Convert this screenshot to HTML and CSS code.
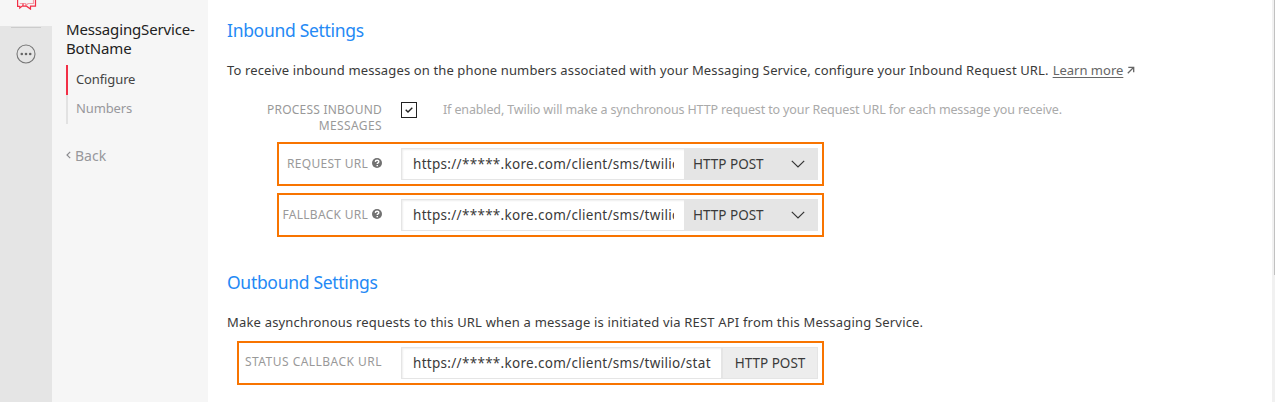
FILE: index.html
```html
<!DOCTYPE html>
<html lang="en">
<head>
<meta charset="utf-8">
<title>Messaging Service</title>
<link rel="stylesheet" href="styles.css">
</head>
<body>
<div class="app">
  <aside class="rail">
    <div class="rail-active">
      <svg class="chat-icon" width="20" height="10" viewBox="0 0 20 10" fill="none" stroke="#f22f46" stroke-width="1.2">
        <path d="M.6 0v6.300h2.200v1.700l3-2.400"/>
        <path d="M2.800 3.500h5.800v2l2.600-2h5.300V0" opacity=".45"/>
        <path d="M6 3.600v2.600h3.500l4 2.900V6.200h5V0"/>
      </svg>
    </div>
    <div class="rail-line"></div>
    <svg class="more-icon" width="20" height="20" viewBox="0 0 20 20">
      <circle cx="10" cy="10" r="9" fill="none" stroke="#777" stroke-width="1.1"/>
      <g fill="#666"><circle cx="5.800" cy="10" r="1.300"/><circle cx="10" cy="10" r="1.300"/><circle cx="14.200" cy="10" r="1.300"/></g>
    </svg>
  </aside>
  <nav class="side">
    <h1 class="side-title">MessagingService-<br>BotName</h1>
    <a class="side-item current">Configure</a>
    <a class="side-item">Numbers</a>
    <a class="back"><svg width="5" height="8" viewBox="0 0 5 8" fill="none" stroke="#8c8c90" stroke-width="1.200"><path d="M4.200.8 1 4l3.200 3.200"/></svg>Back</a>
  </nav>
  <main class="main">
    <h2 class="heading">Inbound Settings</h2>
    <p class="intro"><span class="intro-in">To receive inbound messages on the phone numbers associated with your Messaging Service, configure your Inbound Request URL.</span><a class="learn">Learn more</a><svg width="8" height="8" viewBox="0 0 8 8" fill="none" stroke="#666" stroke-width="1.300"><path d="M1.300 1.300h5.400v5M6.500 1.500 .8 7.200"/></svg></p>
    <div class="process">
      <div class="process-label">PROCESS INBOUND<br><span class="wide">MESSAGES</span></div>
      <span class="check"><svg width="8" height="6" viewBox="0 0 8 6" fill="none" stroke="#222" stroke-width="1.400"><path d="M.7 2.800 3 5 7.300.8"/></svg></span>
      <span class="hint">If enabled, Twilio will make a synchronous HTTP request to your Request URL for each message you receive.</span>
    </div>
    <div class="row">
      <div class="label">REQUEST URL<svg class="help" width="10" height="10" viewBox="0 0 10 10"><circle cx="5" cy="5" r="5" fill="#717171"/><path d="M3.300 3.900C3.400 1.600 6.900 1.800 6.800 3.700 6.800 4.900 5.200 4.700 5.200 6" fill="none" stroke="#fff" stroke-width="1.400"/><path d="M4.500 6.900H6v1.400H4.500z" fill="#fff"/></svg></div>
      <div class="input"><span class="url">https://*****.kore.com/client/sms/twilio</span></div>
      <div class="select">HTTP POST<svg width="14" height="8" viewBox="0 0 14 8" fill="none" stroke="#333" stroke-width="1.200"><path d="M.8.8 7 7 13.200.8"/></svg></div>
    </div>
    <div class="row second">
      <div class="label">FALLBACK URL<svg class="help" width="10" height="10" viewBox="0 0 10 10"><circle cx="5" cy="5" r="5" fill="#717171"/><path d="M3.300 3.900C3.400 1.600 6.900 1.800 6.800 3.700 6.800 4.900 5.200 4.700 5.200 6" fill="none" stroke="#fff" stroke-width="1.400"/><path d="M4.500 6.900H6v1.400H4.500z" fill="#fff"/></svg></div>
      <div class="input"><span class="url">https://*****.kore.com/client/sms/twilio</span></div>
      <div class="select">HTTP POST<svg width="14" height="8" viewBox="0 0 14 8" fill="none" stroke="#333" stroke-width="1.200"><path d="M.8.8 7 7 13.200.8"/></svg></div>
    </div>
    <h2 class="heading outbound">Outbound Settings</h2>
    <p class="intro"><span class="intro-out">Make asynchronous requests to this URL when a message is initiated via REST API from this Messaging Service.</span></p>
    <div class="row status">
      <div class="label">STATUS CALLBACK URL</div>
      <div class="input"><span class="url">https://*****.kore.com/client/sms/twilio/stat</span></div>
      <div class="method">HTTP POST</div>
    </div>
  </main>
  <div class="scroll"><div class="thumb"></div></div>
</div>
</body>
</html>
```
FILE: styles.css
```css
* { box-sizing: border-box; }
body { margin: 0; overflow: hidden; background: #fff; font-family: "Noto Sans", "Open Sans", sans-serif; font-size: 13px; color: #3a3a3a; white-space: nowrap; }
svg { flex: none; display: block; }
.app { display: flex; height: 402px; }
.rail { width: 52px; background: #e5e5e5; display: flex; flex-direction: column; align-items: center; }
.rail-active { width: 100%; height: 26px; background: #f6f6f6; padding-left: 17px; }
.rail-line { width: 30px; height: 1px; margin-top: 1px; background: #ccc; }
.more-icon { margin-top: 16px; }
.side { width: 156px; background: #f6f6f6; padding: 20px 0 0 14px; }
.side-title { margin: 0; font-size: 15px; line-height: 19px; font-weight: 400; letter-spacing: -.15px; color: #222; }
.side-item { display: flex; align-items: center; height: 29px; padding: 0 0 3px 8px; border-left: 2px solid #e2e2e2; letter-spacing: -.12px; color: #98989c; }
.side-title + .side-item { margin-top: 7px; }
.side-item.current { border-left-color: #f22f46; color: #444; height: 30px; padding-bottom: 2px; }
.back { display: flex; align-items: center; gap: 4px; margin-top: 21px; height: 20px; font-size: 14px; color: #98989c; }
.main { width: 1064px; padding: 17px 0 0 19px; }
.heading { margin: 0; height: 26px; line-height: 26px; font-size: 17.5px; font-weight: 400; letter-spacing: -.3px; color: #2489f5; }
.intro { margin: 17px 0 0; height: 20px; line-height: 20px; display: flex; align-items: center; gap: 4px; }
.intro-in { letter-spacing: .13px; }
.intro-out { letter-spacing: .185px; }
.learn { color: #666; text-decoration: underline; text-underline-offset: 2px; }
.process { display: flex; height: 40px; margin-top: 22px; }
.process-label { width: 155px; line-height: 16px; font-size: 12px; letter-spacing: .22px; text-align: right; color: #999; }
.wide { letter-spacing: .4px; }
.check { width: 16px; height: 16px; margin-left: 19px; border: 1px solid #222; display: flex; align-items: center; justify-content: center; }
.hint { margin-left: 26px; line-height: 16px; font-size: 12.5px; letter-spacing: -.13px; color: #aaa; }
.row { display: flex; width: 547px; height: 44px; margin-left: 50px; padding: 4px; border: 2px solid #f87400; }
.second { margin-top: 7px; }
.label { width: 99px; height: 30px; display: flex; align-items: center; justify-content: flex-end; gap: 4px; font-size: 12px; letter-spacing: .28px; color: #999; }
.input { width: 284px; height: 32px; margin-left: 19px; padding: 0 10px 0 11px; border: 1px solid #e5e5e5; box-shadow: inset 1px 1px 2px #eee; display: flex; align-items: center; }
.url { overflow: hidden; flex: 1; font-size: 13.5px; letter-spacing: .3px; }
.select { width: 133px; height: 32px; padding: 0 13px 0 8px; background: #e5e5e5; font-size: 13.5px; display: flex; align-items: center; justify-content: space-between; }
.outbound { margin-top: 32px; }
.status { width: 587px; margin: 9px 0 0 10px; }
.status .label { width: 139px; height: 29px; letter-spacing: .47px; }
.status .input { width: 321px; }
.method { width: 96px; height: 32px; border: 1px solid #e5e5e5; background: #ededed; font-size: 13.5px; display: flex; align-items: center; justify-content: center; }
.scroll { width: 3px; background: #f1f1f1; padding-left: 2px; }
.thumb { height: 275px; background: #c1c1c1; }
```
